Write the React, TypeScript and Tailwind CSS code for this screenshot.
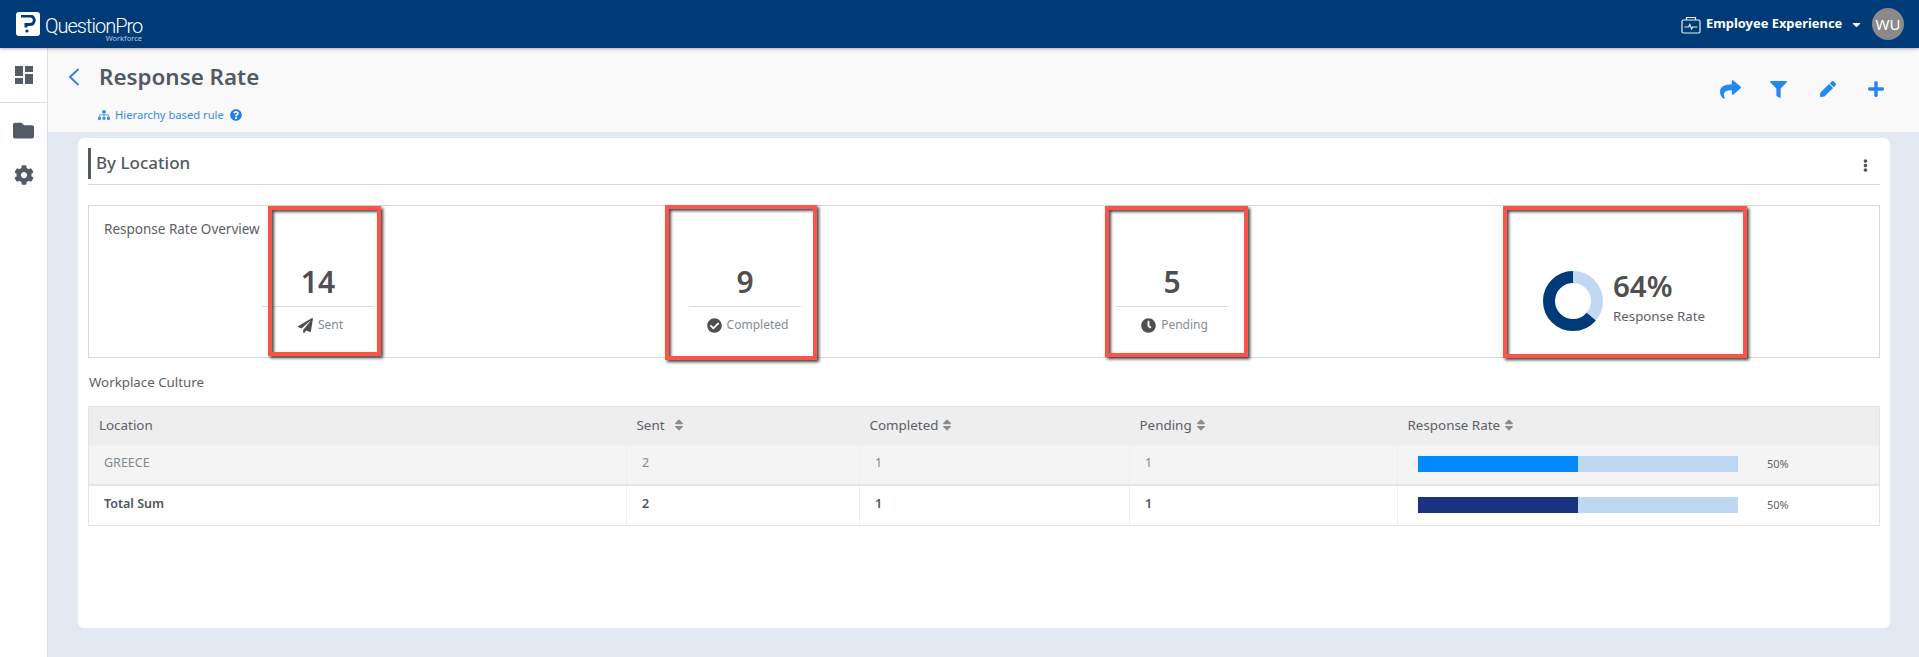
import type { ReactNode } from "react";
import {
  FaCaretDown,
  FaCheckCircle,
  FaClock,
  FaCog,
  FaEllipsisV,
  FaFilter,
  FaFolder,
  FaPaperPlane,
  FaPen,
  FaPlus,
  FaQuestionCircle,
  FaShare,
  FaSitemap,
  FaSort,
} from "react-icons/fa";
import { MdDashboard } from "react-icons/md";

const NOTE = "absolute border-4 border-[#f9554b] shadow-[2px_2px_3px_rgba(0,0,0,0.75),inset_2px_2px_3px_rgba(0,0,0,0.7)]";
const TH = "px-[10px] pb-[2px] text-left text-[13.4px] font-normal text-[#5c6168]";
const TD = "border-l border-[#eeeeee] px-[15px] pb-[2px] text-[12.5px]";

function Stat({ value, label, icon, note }: { value: string; label: string; icon: ReactNode; note: string }) {
  return (
    <div className="relative flex w-[112px] shrink-0 flex-col items-center">
      <div className="flex h-[100px] items-end pb-[4px] text-[30px] font-semibold leading-[40px] text-[#4f4f4f]">{value}</div>
      <div className="flex w-full justify-center gap-[5px] border-t border-[#d8d8d8] pl-[5px] pt-[10px] text-[12px] leading-[16px] text-[#858b91]">
        <span className="flex items-center text-[#4f4f4f]">{icon}</span>
        {label}
      </div>
      <div className={`${NOTE} ${note}`} />
    </div>
  );
}

function Bar({ color, pct }: { color: string; pct: number }) {
  return (
    <div className="flex items-center">
      <div className="h-[16px] w-[320px] bg-[#bfd8f2]">
        <div className={`h-full ${color}`} style={{ width: `${pct}%` }} />
      </div>
      <span className="ml-[29px] text-[11px] text-[#666666]">{pct}%</span>
    </div>
  );
}

function Head({ children, gap }: { children: ReactNode; gap: string }) {
  return (
    <span className={`flex items-center ${gap}`}>
      {children}
      <FaSort size={14} className="text-[#8c8c8c]" />
    </span>
  );
}

export default function App() {
  return (
    <div className="flex h-[657px] w-full flex-col overflow-hidden bg-[#e4e8f1] font-['Noto_Sans',sans-serif]">
      <header className="z-10 flex h-[48px] shrink-0 items-center justify-between bg-[#003b78] pl-[16px] pr-[15px] shadow-[0_1px_3px_rgba(0,0,0,0.3)]">
        <div className="flex items-center gap-[5px]">
          <div className="flex h-[24px] w-[24px] items-center justify-center rounded-[3px] bg-white">
            <svg width="16" height="18" viewBox="0 0 16 18" fill="none">
              <path d="M1 1h9a4.2 4.2 0 0 1 0 8.6H6v3" stroke="#003b78" strokeWidth="3" />
              <circle cx="7" cy="16" r="1.6" fill="#003b78" />
            </svg>
          </div>
          <div className="flex w-[97px] flex-col items-end pt-[12px]">
            <div className="w-full whitespace-nowrap font-['Roboto',sans-serif] text-[20px] font-light leading-[16px] tracking-[-1px] text-white">QuestionPro</div>
            <div className="text-[7.5px] leading-[9px] text-[#b8c8da]">Workforce</div>
          </div>
        </div>
        <div className="flex items-center">
          <svg width="20" height="20" viewBox="0 0 20 20" fill="none" stroke="#e8eef5" strokeWidth="1.2" className="mt-[1px]">
            <rect x="1" y="5" width="18" height="13" rx="1.5" />
            <path d="M5.5 5V2.5h9V5" />
            <path d="M3.5 12h4l1.3-2.5 1.8 4.5 1.2-2h4.5" />
          </svg>
          <span className="ml-[5px] w-[135px] whitespace-nowrap text-[12.9px] font-bold text-white">Employee Experience</span>
          <FaCaretDown size={13} className="ml-[9px] text-white" />
          <div className="ml-[9px] flex h-[32px] w-[32px] items-center justify-center rounded-full bg-[#8a8a8a] text-[15px] text-white">WU</div>
        </div>
      </header>

      <div className="flex min-h-0 flex-1">
        <aside className="flex w-[48px] shrink-0 flex-col border-r border-[#dcdfe5] bg-white text-[#535b66]">
          <div className="flex h-[55px] items-center justify-center border-b border-[#dddddd]">
            <MdDashboard size={24} />
          </div>
          <div className="flex h-[52px] items-center justify-center pt-[3px]">
            <FaFolder size={21} />
          </div>
          <div className="flex h-[40px] items-center justify-center">
            <FaCog size={20} />
          </div>
        </aside>

        <main className="flex min-w-0 flex-1 flex-col">
          <div className="flex h-[84px] shrink-0 justify-between bg-[#f9f9f9] pl-[20px] pr-[34px]">
            <div>
              <div className="flex h-[58px] items-center">
                <svg width="12" height="18" viewBox="0 0 12 18" fill="none" stroke="#2f86ee" strokeWidth="2">
                  <path d="M10.5 1 2 9l8.5 8" />
                </svg>
                <h1 className="ml-[19px] text-[22.4px] font-semibold text-[#545a63]">Response Rate</h1>
              </div>
              <div className="ml-[30px] mt-[1px] flex items-center text-[11.2px] leading-[16px] text-[#3b88ec]">
                <FaSitemap size={12} />
                <span className="ml-[5px]">Hierarchy based rule</span>
                <FaQuestionCircle size={12} className="ml-[6px] text-[#1f7fe6]" />
              </div>
            </div>
            <div className="flex h-[82px] items-center gap-[31px] text-[#2287f0]">
              <FaShare size={21} />
              <FaFilter size={17} className="-ml-[2px] mr-[2px]" />
              <FaPen size={16} />
              <FaPlus size={18} />
            </div>
          </div>

          <section className="ml-[30px] mr-[29px] mt-[6px] h-[490px] rounded-[6px] bg-white px-[10px] pt-[10px]">
            <div className="flex h-[37px] items-start justify-between border-b border-[#d9d9d9] pr-[8px]">
              <h2 className="h-[31px] border-l-[3px] border-[#545a63] pl-[5px] text-[17px] font-medium leading-[29px] text-[#545a63]">By Location</h2>
              <FaEllipsisV size={13} className="mt-[11px] text-[#4f5660]" />
            </div>

            <div className="mt-[20px] flex h-[153px] border border-[#d8d8d8]">
              <div className="w-[173px] shrink-0 pl-[15px] pt-[13px] text-[13.5px] leading-[20px] text-[#5c6168]">
                <span className="whitespace-nowrap">Response Rate Overview</span>
              </div>
              <div className="flex gap-[315px]">
                <Stat value="14" label="Sent" icon={<FaPaperPlane size={15} />} note="left-[6px] -right-[7px] top-0 bottom-[1px]" />
                <Stat value="9" label="Completed" icon={<FaCheckCircle size={15} />} note="-left-[24px] -right-[16px] -top-[1px] -bottom-[3px]" />
                <Stat value="5" label="Pending" icon={<FaClock size={15} />} note="-left-[11px] -right-[20px] top-0 bottom-0" />
                <div className="relative flex h-full shrink-0 items-center pt-[38px]">
                  <svg width="60" height="60" viewBox="0 0 60 60" className="shrink-0 -rotate-90">
                    <circle cx="30" cy="30" r="24" fill="none" stroke="#c0d8f2" strokeWidth="12" />
                    <circle cx="30" cy="30" r="24" fill="none" stroke="#003b78" strokeWidth="12" strokeDasharray="96.5 150.8" strokeDashoffset="-54.3" />
                  </svg>
                  <div className="ml-[10px] whitespace-nowrap pb-[6px]">
                    <div className="text-[29.5px] font-semibold leading-[34px] text-[#4f4f4f]">64%</div>
                    <div className="mt-[2px] text-[13.3px] leading-[22px] text-[#5c6168]">Response Rate</div>
                  </div>
                  <div className={`${NOTE} -left-[40px] -right-[42px] top-0 -bottom-[1px]`} />
                </div>
              </div>
            </div>

            <div className="ml-[1px] mt-[14px] text-[13.3px] leading-[20px] text-[#5c6168]">Workplace Culture</div>

            <table className="mt-[14px] w-full table-fixed border border-[#e4e4e4]">
              <colgroup>
                <col className="w-[538px]" />
                <col className="w-[233px]" />
                <col className="w-[270px]" />
                <col className="w-[268px]" />
                <col />
              </colgroup>
              <thead>
                <tr className="h-[38px] bg-[#eeeeee]">
                  <th className={TH}>Location</th>
                  <th className={TH}><Head gap="gap-[7px]">Sent</Head></th>
                  <th className={TH}><Head gap="gap-[2px]">Completed</Head></th>
                  <th className={TH}><Head gap="gap-[2px]">Pending</Head></th>
                  <th className={`${TH} !pl-[10px]`}><Head gap="gap-[2px]">Response Rate</Head></th>
                </tr>
              </thead>
              <tbody>
                <tr className="h-[40px] border-b-2 border-[#e6e6e6] bg-[#f4f4f4] text-[#7f8a8f]">
                  <td className={`${TD} border-l-0`}>GREECE</td>
                  <td className={TD}>2</td>
                  <td className={TD}>1</td>
                  <td className={TD}>1</td>
                  <td className={`${TD} !pb-0 !pl-[20px]`}><Bar color="bg-[#0088ff]" pct={50} /></td>
                </tr>
                <tr className="h-[41px] font-semibold text-[#4f5660]">
                  <td className={`${TD} border-l-0`}>Total Sum</td>
                  <td className={TD}>2</td>
                  <td className={TD}>1</td>
                  <td className={TD}>1</td>
                  <td className={`${TD} !pb-0 !pl-[20px] font-normal`}><Bar color="bg-[#1b3281]" pct={50} /></td>
                </tr>
              </tbody>
            </table>
          </section>
        </main>
      </div>
    </div>
  );
}
